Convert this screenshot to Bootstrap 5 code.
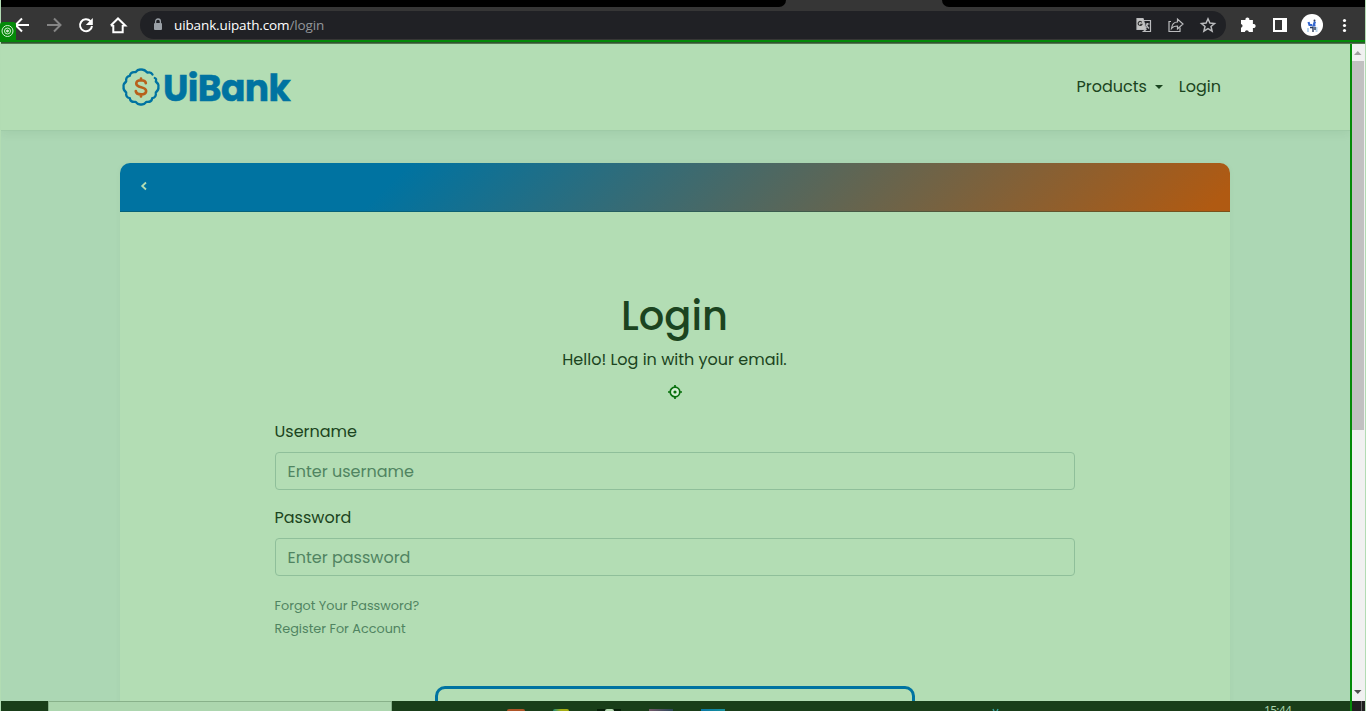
<!DOCTYPE html>
<html lang="en">
<head>
<meta charset="utf-8">
<meta name="viewport" content="width=device-width, initial-scale=1">
<title>UiBank</title>
<link href="https://cdn.jsdelivr.net/npm/bootstrap@5.3.0/dist/css/bootstrap.min.css" rel="stylesheet">
<style>
  body { width:1366px; height:711px; font-family:Poppins,Inter,"Open Sans",sans-serif; font-size:16px; line-height:24px; color:#1b4420; background:#b2dcb3; }
  .screen { width:1365px; height:711px; border-left:1px solid #b2dcb3; }
  .browser { height:40px; background:#363636; }
  .tabs { height:7px; background:#363636; }
  .tabs-l { width:785px; background:#000; border-bottom-right-radius:7px; }
  .tabs-r { width:423px; background:#000; border-bottom-left-radius:7px; }
  .tools { height:33px; padding-top:4px; }
  .tools svg { display:block; flex:none; }
  .omni { width:1086px; height:28px; border-radius:14px; background:#202125; font:13.5px/28px "Open Sans",sans-serif; color:#fff; }
  .omni .url { letter-spacing:-.12px; }
  .omni .path { color:#93969a; }
  .frame-line { height:4px; border-top:2px solid #048a08; background:#2f5530; border-bottom:1px solid #53794f; }
  .site { width:1349px; height:657px; background:#acd7b4; overflow:hidden; }
  .topnav { height:87px; background:#b3ddb4; border-bottom:1px solid #9fcba7; box-shadow:0 2px 10px rgba(0,60,30,.07); }
  .inner { width:1110px; margin-left:119px; }
  .brand { font-weight:700; font-size:36px; line-height:40px; color:#0073a1; letter-spacing:-.6px; margin-left:1px; padding-top:4px; -webkit-text-stroke:.5px #0073a1; }
  .links { padding-right:9px; }
  .login-card { height:560px; margin-top:32px; background:#b3ddb4; border-radius:10px 10px 0 0; box-shadow:0 0 6px rgba(0,60,30,.035); }
  .login-head { height:49px; border-radius:10px 10px 0 0; border-bottom:1px solid rgba(20,60,30,.3); background:linear-gradient(135deg,#0073a1 25%,#b05a12 98%); padding:18px 0 0 20px; }
  .fields { width:800px; margin:0 auto; padding-top:76px; }
  .title { font-size:40px; line-height:48px; font-weight:500; }
  .title, .hello { position:relative; margin-left:-1px; }
  .fields .form-control { height:38px; background:transparent; border:1px solid #8fbf9a; border-radius:4px; padding:6px 11.5px; font-size:16px; }
  .fields .form-control::placeholder { color:#508461; opacity:1; }
  .fields label, .minor { margin-left:-.5px; }
  .minor { font-size:12.8px; line-height:23px; color:#508461; }
  .submit { width:480px; height:50px; border:3px solid #0073a1; border-radius:10px; margin-top:46px; }
  .side { width:2px; height:657px; background:#048a08; }
  .side-low { left:1349px; top:701px; height:10px; }
  .scroll { width:13px; height:657px; background:#f1f1f1; }
  .thumb { height:369px; background:#c1c1c1; width:12px; }
  .taskbar { height:10px; background:#193e19; overflow:hidden; }
  .search { width:344px; margin-left:47px; border:1px solid #88b18a; border-bottom:0; background:#acd6ae; }
  .task-icons { width:218px; margin-left:115px; padding-top:8px; }
  .task-icons i { display:block; height:2px; }
  .tray { margin-left:259px; font:12px/14px "Open Sans",sans-serif; color:#acd6ae; padding-top:3px; letter-spacing:-.7px; }
  .marker { left:-1px; top:22px; width:16px; height:20px; background:#048a08; border-radius:3px 3px 0 0; }
</style>
</head>
<body class="overflow-hidden">
<div class="screen position-relative d-flex flex-column">
  <header class="browser flex-shrink-0">
    <div class="tabs d-flex justify-content-between"><div class="tabs-l"></div><div class="tabs-r"></div></div>
    <div class="tools d-flex">
      <svg width="139" height="28" viewBox="1 11 139 28" fill="none" stroke="#fff" stroke-width="2">
        <path d="M29 25H16M22 18.500 15.500 25l6.500 6.500"/>
        <path d="M47 25H60M54 18.500 60.500 25 54 31.500" stroke="#858585"/>
        <path d="M90.500 21.200A6 6 0 1 0 92 26"/><path d="M92.800 18v7h-7z" fill="#fff" stroke="none"/>
        <path d="M113.300 25v7.300h9.400V25M110.800 25.500 118 18.500l7.200 7h-2.500M113.300 25.500h-2.500"/>
      </svg>
      <div class="omni d-flex">
        <svg width="34" height="28" viewBox="140 11 34 28"><rect x="154" y="23" width="8" height="7" rx="1" fill="#9aa0a6"/><path d="M155.600 23v-1.600a2.400 2.400 0 0 1 4.800 0V23" fill="none" stroke="#9aa0a6" stroke-width="1.300"/></svg>
        <span class="url">uibank.uipath.com<span class="path">/login</span></span>
        <svg class="ms-auto" width="96" height="28" viewBox="1130 11 96 28" fill="none" stroke="#bbbcbe" stroke-width="1.200">
          <path d="M1137 18.500h6l3 11h-9z" fill="#c4c4c4"/><path d="M1144 20.500h6.500v11h-7l2.500-2M1145.500 24h4M1147.500 23v1c-.2 2-1 3-2 4M1146 25l3 3.500"/><path d="M1141.800 22.300a2 2 0 1 0 .2 2h-1.800" stroke="#333"/>
          <path d="M1171 21.500h-2v10h11v-4"/><path d="M1171.500 28.500c.5-4.500 3-6.500 6-6.500v-3l5.500 5-5.500 5v-3c-3 0-4.500.5-6 2.500z"/>
          <path d="m1208 18.800 1.900 4.300 4.600.4-3.500 3 1.100 4.600-4.100-2.400-4.100 2.400 1.100-4.600-3.500-3 4.600-.4z" stroke-width="1.500"/>
        </svg>
      </div>
      <svg width="138" height="28" viewBox="1226 11 138 28">
        <path d="M1242 20h3.500a2 2 0 1 1 3.800 0h3.600v4a2.100 2.100 0 1 1 0 4v4h-4a2.100 2.100 0 0 0-4.100 0H1241v-4.200a2 2 0 0 0 0-3.900V20z" fill="#fff"/>
        <path d="M1273 18h14v14h-14zM1275 20v10h7V20z" fill="#fff" fill-rule="evenodd"/>
        <circle cx="1312" cy="25" r="11" fill="#fff"/>
        <path d="M1308 28v4M1316.500 27v5" stroke="#b9d6ee" stroke-width="2"/><path d="m1308.500 22 1 3h2.500M1315 21.500l-1.500 4h2" stroke="#3467cf" stroke-width="2.200" fill="none"/><path d="M1310 27.500h3v4.500M1315 27v3" stroke="#27395a" stroke-width="1.400" fill="none"/><circle cx="1314.500" cy="20.500" r="1" fill="#27395a"/>
        <g fill="#fff"><circle cx="1344.500" cy="20.500" r="1.600"/><circle cx="1344.500" cy="25.500" r="1.600"/><circle cx="1344.500" cy="30.500" r="1.600"/></g>
      </svg>
    </div>
  </header>
  <div class="frame-line flex-shrink-0"></div>
  <div class="d-flex flex-shrink-0">
    <main class="site">
      <nav class="topnav">
        <div class="inner h-100 d-flex align-items-center">
          <svg width="42" height="42" viewBox="0 0 42 42" fill="none" stroke="#0073a1" stroke-width="2.300" stroke-linecap="round" stroke-linejoin="round">
            <path d="M32.500 8.500Q31 5.500 27.500 6.600 Q24 3 21 3.600 Q18 3 15.500 6.200 Q10.500 5.500 9.800 9.800 Q5.500 10.500 6.200 15.500 Q3 18 3.600 21 Q3 24 6.200 26.500 Q5.500 31.500 9.800 32.200 Q10.500 36.500 15.500 35.800 Q18 39 21 38.400 Q24 39 26.500 35.800 Q31.500 36.500 32.200 32.200 Q36.500 31.500 35.800 26.500 Q39 24 38.400 21 Q39 18 35.800 15.500 Q36.800 12.500 34.800 12"/>
            <path d="M25.800 17.200c-.5-4-9.500-4-9.500.3 0 5 9.800 2.500 9.800 7.500 0 4.500-9.800 4.500-10.300 0M21 12.500v2M21 28.500v2" stroke="#b8611b" stroke-width="2.700"/>
          </svg>
          <span class="brand">UiBank</span>
          <div class="links ms-auto d-flex">
            <span>Products</span>
            <svg width="24" height="24" viewBox="0 0 24 24"><path d="M8 10h8l-4 4z" fill="#1b4420"/></svg>
            <span class="ms-2">Login</span>
          </div>
        </div>
      </nav>
      <section class="login-card inner">
        <div class="login-head"><svg class="d-block" width="8" height="10" viewBox="0 0 8 10"><path d="M6 1.500 2.200 5 6 8.500" fill="none" stroke="#b3ddb4" stroke-width="1.800"/></svg></div>
        <div class="fields">
          <div class="text-center">
            <h1 class="title mb-0 pt-1">Login</h1>
            <p class="hello mb-0 mt-1 pt-1">Hello! Log in with your email.</p>
            <svg class="d-block mx-auto" style="margin-top:13px" width="14" height="14" viewBox="0 0 14 14" fill="none" stroke="#08700d" stroke-width="1.700"><circle cx="7" cy="7" r="4.800" fill="#d5eed5"/><path d="M7 0v2M7 12v2M0 7h2M12 7h2"/><circle cx="7" cy="7" r="1.600" fill="#08700d" stroke="none"/></svg>
          </div>
          <form>
            <label class="d-block" style="margin-top:21px">Username</label>
            <input class="form-control" style="margin-top:8px" type="text" placeholder="Enter username">
            <label class="d-block" style="margin-top:16px">Password</label>
            <input class="form-control" style="margin-top:8px" type="text" placeholder="Enter password">
            <div class="minor" style="margin-top:18px"><div>Forgot Your Password?</div><div>Register For Account</div></div>
            <div class="submit mx-auto"></div>
          </form>
        </div>
      </section>
    </main>
    <div class="side"></div>
    <aside class="scroll d-flex flex-column">
      <svg class="d-block" width="13" height="17" viewBox="0 0 13 17"><path d="M2 11h7.500L5.800 7z" fill="#a0a0a0"/></svg>
      <div class="thumb"></div>
      <svg class="d-block mt-auto" width="13" height="17" viewBox="0 0 13 17"><path d="M2 6h7.500L5.800 10z" fill="#505050"/></svg>
    </aside>
  </div>
  <footer class="taskbar d-flex flex-shrink-0">
    <div class="search"></div>
    <div class="task-icons d-flex justify-content-between">
      <i style="width:18px;background:#ae5426;border-radius:9px 9px 0 0"></i><i style="width:16px;background:linear-gradient(90deg,#1a8a7a,#a4ad12 50%);border-radius:9px 9px 0 0"></i><i style="width:24px;background:#061f08"><i class="mx-auto" style="width:9px;background:#b5d9b2;border-radius:5px 5px 0 0"></i></i><i style="width:24px;background:linear-gradient(90deg,#735968,#2b4658)"></i><i style="width:24px;background:linear-gradient(90deg,#0877a5,#17929c)"></i>
    </div>
    <svg class="flex-shrink-0" width="15" height="10" viewBox="0 0 15 10" style="margin-left:265px"><path d="m3 8 1 2m4-2-1 2" stroke="#34a29c" stroke-width="1.500"/></svg>
    <div class="tray">15:44</div>
    <div class="ms-auto" style="width:13px;background:#202020"><div class="h-100 ms-auto" style="width:4px;border-left:1px solid #666"></div></div>
  </footer>
  <div class="marker position-absolute"><svg class="d-block" width="15" height="18" viewBox="0 0 15 18" fill="none" stroke="#d4efd4"><circle cx="7.500" cy="9" r="5.500"/><circle cx="7.500" cy="9" r="3"/><circle cx="7.500" cy="9" r="1" fill="#d4efd4"/></svg></div>
  <div class="side side-low position-absolute"></div>
</div>
<script src="https://cdn.jsdelivr.net/npm/bootstrap@5.3.0/dist/js/bootstrap.bundle.min.js"></script>
</body>
</html>
